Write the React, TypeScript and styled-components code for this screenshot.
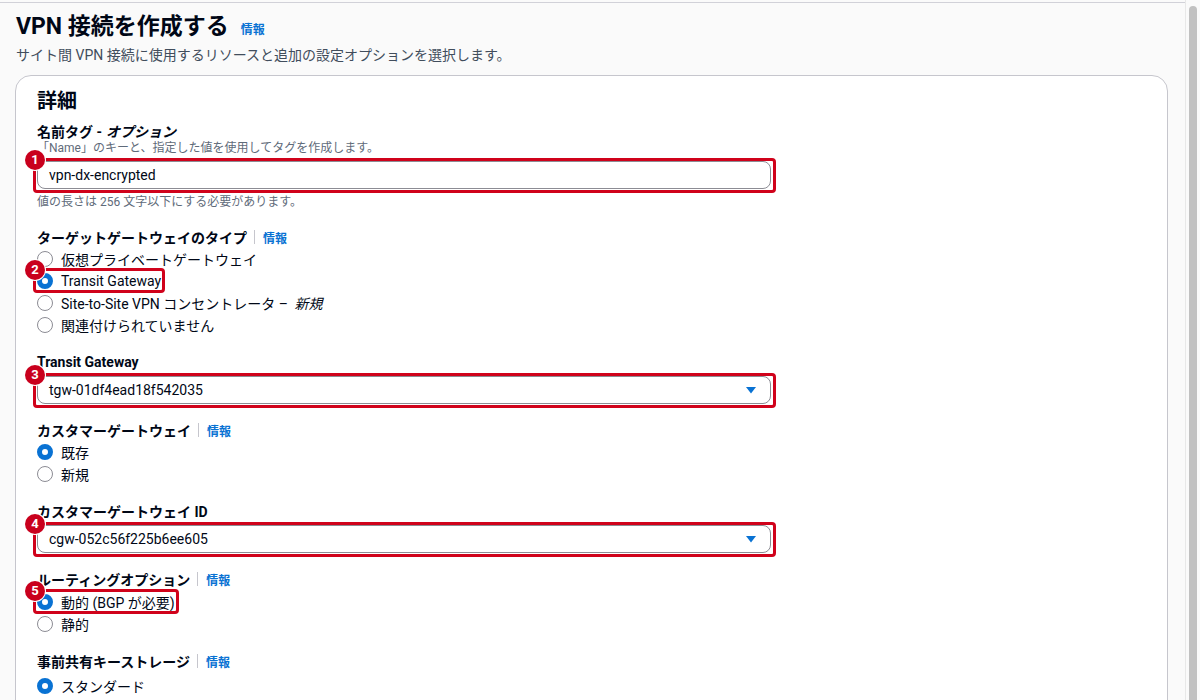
import styled, { createGlobalStyle } from "styled-components";
import type { ReactNode } from "react";

const GlobalStyle = createGlobalStyle`
  html, body {
    margin: 0;
    padding: 0;
  }
  body {
    background: #fafafa;
    font-family: Roboto, "Noto Sans CJK JP", sans-serif;
    color: #000716;
    -webkit-font-smoothing: antialiased;
  }
`;

type Option = { label: ReactNode; checked?: boolean; mark?: number };

const Marked = ({ n, radio, children }: { n: number; radio?: boolean; children: ReactNode }) => (
  <MarkWrap>
    {children}
    <MarkFrame $radio={radio}>
      <Badge>{n}</Badge>
    </MarkFrame>
  </MarkWrap>
);

const Label = ({ children, info }: { children: ReactNode; info?: boolean }) => (
  <LabelRow>
    {children}
    {info && (
      <>
        <Divider />
        <InfoLink>情報</InfoLink>
      </>
    )}
  </LabelRow>
);

const Radios = ({ options, offset = 2 }: { options: Option[]; offset?: number }) => (
  <RadioGroup $offset={offset}>
    {options.map((opt, i) => {
      const row = (
        <RadioRow key={i}>
          <RadioCircle $checked={opt.checked} />
          <span>{opt.label}</span>
        </RadioRow>
      );
      return opt.mark ? (
        <Marked key={i} n={opt.mark} radio>
          {row}
        </Marked>
      ) : (
        row
      );
    })}
  </RadioGroup>
);

const Select = ({ value }: { value: string }) => (
  <SelectBox>
    <span>{value}</span>
    <svg width="10" height="7" viewBox="0 0 10 7">
      <path d="M0 0h10L5 6.5z" fill="#0972d3" />
    </svg>
  </SelectBox>
);

const App = () => {
  return (
    <Shell>
      <GlobalStyle />
      <Main>
        <Header>
          <Title>
            VPN 接続を作成する<TitleInfo>情報</TitleInfo>
          </Title>
          <Subtitle>サイト間 VPN 接続に使用するリソースと追加の設定オプションを選択します。</Subtitle>
        </Header>

        <Card>
          <CardTitle>詳細</CardTitle>
          <Fields>
            <Field>
              <Label>
                名前タグ - <i>オプション</i>
              </Label>
              <Hint>「Name」のキーと、指定した値を使用してタグを作成します。</Hint>
              <Control>
                <Marked n={1}>
                  <InputBox>vpn-dx-encrypted</InputBox>
                </Marked>
              </Control>
              <Constraint>値の長さは 256 文字以下にする必要があります。</Constraint>
            </Field>

            <Field>
              <Label info>ターゲットゲートウェイのタイプ</Label>
              <Radios
                options={[
                  { label: "仮想プライベートゲートウェイ" },
                  { label: "Transit Gateway", checked: true, mark: 2 },
                  {
                    label: (
                      <>
                        Site-to-Site VPN コンセントレータ – <i>新規</i>
                      </>
                    ),
                  },
                  { label: "関連付けられていません" },
                ]}
              />
            </Field>

            <Field>
              <Label>Transit Gateway</Label>
              <Control>
                <Marked n={3}>
                  <Select value="tgw-01df4ead18f542035" />
                </Marked>
              </Control>
            </Field>

            <Field>
              <Label info>カスタマーゲートウェイ</Label>
              <Radios options={[{ label: "既存", checked: true }, { label: "新規" }]} />
            </Field>

            <Field>
              <Label>カスタマーゲートウェイ ID</Label>
              <Control>
                <Marked n={4}>
                  <Select value="cgw-052c56f225b6ee605" />
                </Marked>
              </Control>
            </Field>

            <Field>
              <Label info>ルーティングオプション</Label>
              <Radios
                offset={3}
                options={[{ label: "動的 (BGP が必要)", checked: true, mark: 5 }, { label: "静的" }]}
              />
            </Field>

            <Field>
              <Label info>事前共有キーストレージ</Label>
              <Radios offset={5} options={[{ label: "スタンダード", checked: true }]} />
            </Field>
          </Fields>
        </Card>
      </Main>
      <ScrollTrack>
        <ScrollThumb />
      </ScrollTrack>
    </Shell>
  );
};

export default App;

const Shell = styled.div`
  display: flex;
  height: 700px;
  overflow: hidden;
`;

const Main = styled.main`
  flex: 1;
  min-width: 0;
  margin-top: 2px;
  border-top: 1px solid #d1d1d8;
  padding: 9px 17px 0 15px;
`;

const Header = styled.header`
  padding-left: 1px;
`;

const Title = styled.h1`
  margin: 0;
  font-size: 23px;
  line-height: 30px;
  font-weight: 700;
  color: #000716;
`;

const TitleInfo = styled.span`
  margin-left: 12px;
  font-size: 12px;
  font-weight: 700;
  color: #0972d3;
`;

const Subtitle = styled.p`
  margin: 1px 0 0;
  font-size: 14px;
  line-height: 18px;
  color: #414d5c;
`;

const Card = styled.section`
  margin-top: 11px;
  min-height: 700px;
  background: #fff;
  border: 1px solid #c6c6cd;
  border-radius: 16px;
  padding: 12px 20px 40px 21px;
`;

const CardTitle = styled.h2`
  margin: 0;
  font-size: 20px;
  line-height: 26px;
  font-weight: 700;
`;

const Fields = styled.div`
  margin-top: 8px;
  display: flex;
  flex-direction: column;
  gap: 17px;
`;

const Field = styled.div`
  display: flex;
  flex-direction: column;
  align-items: flex-start;
`;

const LabelRow = styled.div`
  display: flex;
  align-items: center;
  height: 18px;
  font-size: 14px;
  font-weight: 700;

  i {
    margin-left: 4px;
  }
`;

const Divider = styled.span`
  width: 1px;
  height: 14px;
  background: #c6c6cd;
  margin: 0 8px 0 7px;
`;

const InfoLink = styled.span`
  font-size: 12px;
  font-weight: 700;
  color: #0972d3;
`;

const Hint = styled.div`
  font-size: 12px;
  line-height: 16px;
  color: #5f6b7a;
`;

const Constraint = styled.div`
  margin-top: 4px;
  font-size: 12px;
  line-height: 18px;
  color: #5f6b7a;
`;

const Control = styled.div`
  margin-top: 5px;
  width: 734px;
`;

const InputBox = styled.div`
  box-sizing: border-box;
  height: 28px;
  display: flex;
  align-items: center;
  padding: 0 11px;
  border: 1px solid #8c8c94;
  border-radius: 8px;
  font-size: 14px;
  background: #fff;
`;

const SelectBox = styled(InputBox)`
  justify-content: space-between;
  padding-right: 14px;

  svg {
    display: block;
  }
`;

const RadioGroup = styled.div<{ $offset: number }>`
  margin-top: ${(p) => p.$offset}px;
  display: flex;
  flex-direction: column;
  align-items: flex-start;
`;

const RadioRow = styled.div`
  display: flex;
  align-items: center;
  gap: 8px;
  height: 22px;
  font-size: 14px;

  i {
    margin-left: 3px;
  }
`;

const RadioCircle = styled.span<{ $checked?: boolean }>`
  box-sizing: border-box;
  width: 16px;
  height: 16px;
  border-radius: 50%;
  background: #fff;
  border: ${(p) => (p.$checked ? "5px solid #0972d3" : "1.5px solid #8c8c94")};
`;

const MarkWrap = styled.div`
  position: relative;
`;

const MarkFrame = styled.div<{ $radio?: boolean }>`
  position: absolute;
  inset: ${(p) => (p.$radio ? "-2px -4px -1px -4px" : "-3px -5px -4px -4px")};
  border: 3px solid #d0021b;
  border-radius: 4px;
  pointer-events: none;
`;

const Badge = styled.span`
  position: absolute;
  top: -11px;
  left: -11px;
  width: 20px;
  height: 20px;
  border-radius: 50%;
  background: #c9001d;
  box-shadow: 0 0 0 1px #fff;
  color: #fff;
  font-size: 13px;
  font-weight: 700;
  line-height: 20px;
  text-align: center;
`;

const ScrollTrack = styled.div`
  width: 8px;
  flex-shrink: 0;
  border-left: 1px solid #e8e8e8;
  background: #fafafa;
  padding: 6px 3px 0;
`;

const ScrollThumb = styled.div`
  height: 1000px;
  border-radius: 4px;
  background: #c1c1c1;
`;
